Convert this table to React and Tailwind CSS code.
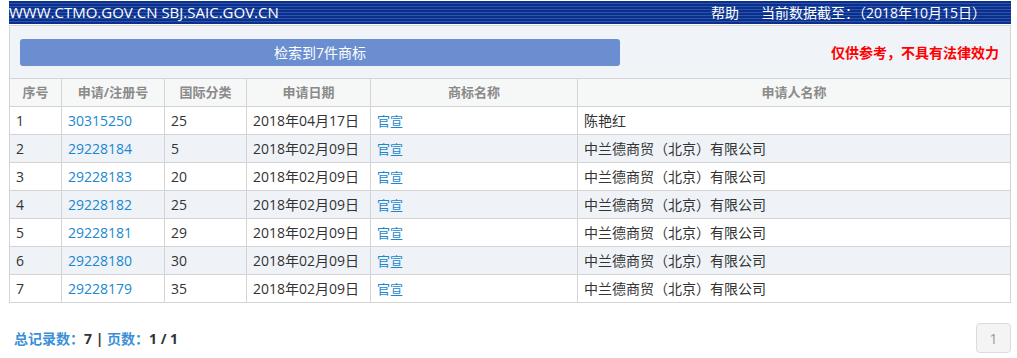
const rows = [
  { no: 1, reg: '30315250', cls: '25', date: '2018年04月17日', name: '官宣', owner: '陈艳红' },
  { no: 2, reg: '29228184', cls: '5', date: '2018年02月09日', name: '官宣', owner: '中兰德商贸（北京）有限公司' },
  { no: 3, reg: '29228183', cls: '20', date: '2018年02月09日', name: '官宣', owner: '中兰德商贸（北京）有限公司' },
  { no: 4, reg: '29228182', cls: '25', date: '2018年02月09日', name: '官宣', owner: '中兰德商贸（北京）有限公司' },
  { no: 5, reg: '29228181', cls: '29', date: '2018年02月09日', name: '官宣', owner: '中兰德商贸（北京）有限公司' },
  { no: 6, reg: '29228180', cls: '30', date: '2018年02月09日', name: '官宣', owner: '中兰德商贸（北京）有限公司' },
  { no: 7, reg: '29228179', cls: '35', date: '2018年02月09日', name: '官宣', owner: '中兰德商贸（北京）有限公司' },
];

const th = 'border border-[#d4d4d4] h-[28px] text-[13px] font-bold text-[#8a8a8a] text-center';
const td = 'border border-[#d4d4d4] h-[28px] px-[6px] text-[14px] text-[#333]';

export default function App() {
  return (
    <div className="w-[1017px] h-[358px] bg-white pt-[1px] pl-[9px] pr-[6px] font-['Open_Sans','Noto_Sans_CJK_SC',sans-serif]">
      <div className="flex h-[23px] items-center justify-between bg-[repeating-linear-gradient(180deg,#0c2f8c_0px,#0c2f8c_2px,#2a55ad_2px,#2a55ad_3px)] pr-[1px] text-white">
        <span className="text-[15px]">WWW.CTMO.GOV.CN SBJ.SAIC.GOV.CN</span>
        <div className="flex gap-[22px] pr-[24px] text-[14px]">
          <span>帮助</span>
          <span>当前数据截至：（2018年10月15日）</span>
        </div>
      </div>
      <div className="mt-[1px] flex h-[53px] items-center justify-between border border-b-0 border-[#d4d4d4] bg-[#f0f4f8] pl-[10px] pr-[11px]">
        <div className="flex h-[27px] w-[600px] items-center justify-center rounded-[3px] bg-[#6a8ed0] text-[14px] text-white">
          检索到7件商标
        </div>
        <span className="text-[14px] font-bold text-[#ff0000]">仅供参考，不具有法律效力</span>
      </div>
      <table className="w-[1002px] border-collapse">
        <colgroup>
          <col className="w-[52px]" />
          <col className="w-[103px]" />
          <col className="w-[82px]" />
          <col className="w-[124px]" />
          <col className="w-[207px]" />
          <col />
        </colgroup>
        <thead>
          <tr className="bg-[#f6f7f7]">
            <th className={th}>序号</th>
            <th className={th}>申请/注册号</th>
            <th className={th}>国际分类</th>
            <th className={th}>申请日期</th>
            <th className={th}>商标名称</th>
            <th className={th}>申请人名称</th>
          </tr>
        </thead>
        <tbody>
          {rows.map((r) => (
            <tr key={r.no} className={r.no % 2 === 0 ? 'bg-[#eff3f8]' : 'bg-white'}>
              <td className={td}>{r.no}</td>
              <td className={td}><span className="text-[#1a87cf]">{r.reg}</span></td>
              <td className={td}>{r.cls}</td>
              <td className={td}>{r.date}</td>
              <td className={td}><span className="text-[13px] text-[#1a87cf]">{r.name}</span></td>
              <td className={td}>{r.owner}</td>
            </tr>
          ))}
        </tbody>
      </table>
      <div className="mt-[20px] flex items-center justify-between">
        <div className="pl-[5px] text-[14px] font-bold text-[#333]">
          <span className="text-[#3b8fd6]">总记录数：</span>7 | <span className="text-[#3b8fd6]">页数：</span>1 / 1
        </div>
        <div className="flex h-[30px] w-[35px] items-center justify-center rounded-[4px] border border-[#dcdcdc] bg-[#f4f4f4] text-[14px] text-[#999]">
          1
        </div>
      </div>
    </div>
  );
}
